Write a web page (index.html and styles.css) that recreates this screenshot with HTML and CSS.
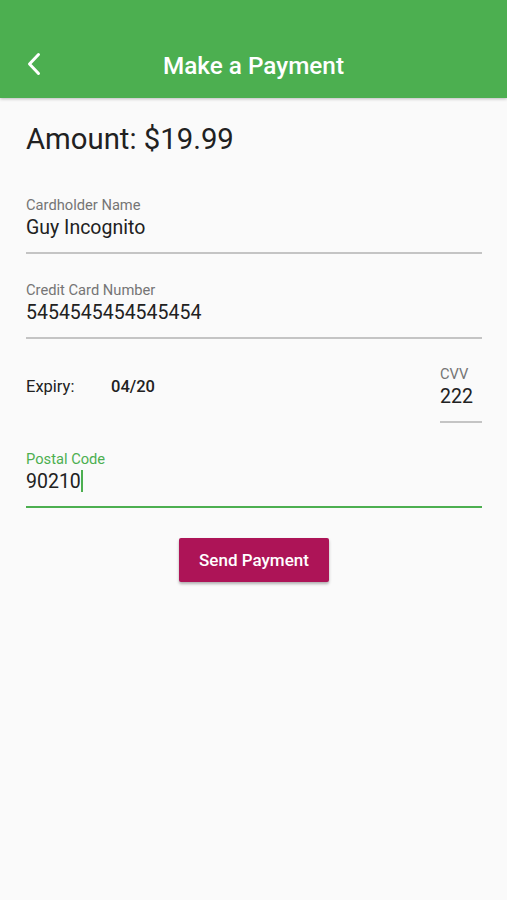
FILE: index.html
```html
<!DOCTYPE html>
<html>
<head>
<meta charset="utf-8">
<link rel="stylesheet" href="styles.css">
</head>
<body>
<header class="appbar">
  <svg class="back" width="26" height="26" viewBox="0 0 26 26"><path d="M16.5 3.5 L7.5 13 L16.5 22.5" fill="none" stroke="#fff" stroke-width="3" stroke-linecap="round" stroke-linejoin="round"/></svg>
  <h1 class="title">Make a Payment</h1>
</header>
<main class="content">
  <div class="amount">Amount: $19.99</div>
  <div class="field">
    <div class="label">Cardholder Name</div>
    <div class="value">Guy Incognito</div>
  </div>
  <div class="field field-before-row">
    <div class="label">Credit Card Number</div>
    <div class="value">5454545454545454</div>
  </div>
  <div class="row">
    <div class="expiry"><span class="exp-label">Expiry:</span><span class="exp-value">04/20</span></div>
    <div class="field cvv">
      <div class="label">CVV</div>
      <div class="value">222</div>
    </div>
  </div>
  <div class="field focused">
    <div class="label">Postal Code</div>
    <div class="value">90210<span class="cursor"></span></div>
  </div>
  <div class="actions">
    <button class="btn">Send Payment</button>
  </div>
</main>
</body>
</html>
```
FILE: styles.css
```css
html, body {
  margin: 0;
  padding: 0;
}
body {
  background: #fafafa;
  font-family: Roboto, "Noto Sans", sans-serif;
  color: #212121;
  width: 507px;
  height: 900px;
}
.appbar {
  position: relative;
  height: 98px;
  background: #4caf50;
  box-shadow: 0 1px 3px rgba(0,0,0,0.25);
  display: flex;
  align-items: flex-end;
  justify-content: center;
}
.back {
  position: absolute;
  left: 22px;
  top: 51px;
}
.title {
  margin: 0 0 18px 0;
  font-size: 24.3px;
  line-height: 28px;
  font-weight: 500;
  color: #fff;
}
.content {
  padding: 23px 25px 0 26px;
}
.amount {
  font-size: 29.3px;
  line-height: 36px;
  color: #212121;
  margin-bottom: 40px;
}
.field {
  border-bottom: 2px solid #c4c4c4;
  padding-bottom: 12px;
  margin-bottom: 28px;
}
.field-before-row {
  margin-bottom: 27px;
}
.label {
  font-size: 14.7px;
  line-height: 16px;
  color: #757575;
  margin-bottom: 3px;
}
.value {
  font-size: 19.5px;
  line-height: 24px;
  color: #212121;
}
.row {
  display: flex;
  justify-content: space-between;
  align-items: flex-start;
}
.expiry {
  margin-top: 9px;
  font-size: 16.5px;
  line-height: 24px;
  color: #212121;
}
.exp-label {
  display: inline-block;
  width: 85px;
}
.exp-value {
  font-weight: 500;
}
.cvv {
  width: 42px;
}
.focused {
  border-bottom-color: #4caf50;
}
.focused .label {
  color: #4caf50;
}
.cursor {
  display: inline-block;
  width: 2px;
  height: 22px;
  background: #4caf50;
  vertical-align: -4px;
}
.actions {
  display: flex;
  justify-content: center;
  padding-top: 2px;
}
.btn {
  width: 150px;
  height: 44px;
  border: none;
  border-radius: 2px;
  background: #ad1457;
  color: #fff;
  font-family: Roboto, "Noto Sans", sans-serif;
  font-size: 17px;
  font-weight: 500;
  box-shadow: 0 2px 3px rgba(0,0,0,0.3);
}
```
